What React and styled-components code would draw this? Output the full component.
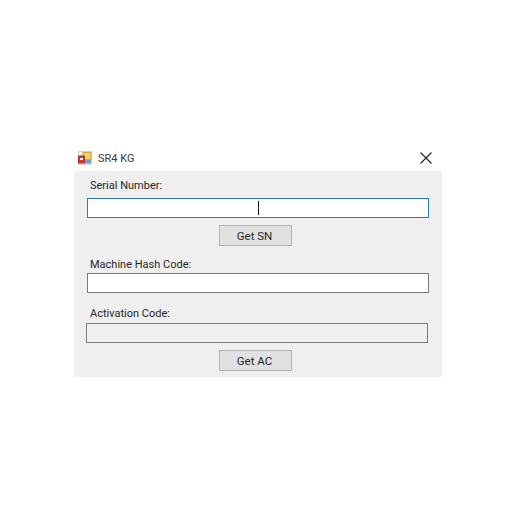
import React from 'react'
import styled, { createGlobalStyle } from 'styled-components'

const Global = createGlobalStyle`
    html, body {
        margin: 0;
        padding: 0;
        background: #fff;
    }
`

const Page = styled.div`
    width: 523px;
    height: 515px;
    padding: 145px 0 0 74px;
    box-sizing: border-box;
    font-family: Roboto, "Liberation Sans", sans-serif;
    font-size: 11px;
    color: #262626;
`

const Dialog = styled.div`
    width: 368px;
`

const TitleBar = styled.div`
    display: flex;
    align-items: center;
    height: 26px;
    padding: 0 10px 0 4px;
`

const Title = styled.span`
    margin-left: 6px;
    flex: 1;
    color: #3a3a3a;
`

const Body = styled.div`
    display: flex;
    flex-direction: column;
    height: 206px;
    padding: 0 13px 0 13px;
    box-sizing: border-box;
    background: #efefef;
`

const Label = styled.label`
    display: block;
    height: 17px;
    line-height: 17px;
    margin-top: ${p => p.$top}px;
    margin-left: 3px;
`

const FieldWrap = styled.div`
    position: relative;
    width: 342px;
    height: 20px;
    margin-top: ${p => p.$top}px;
    margin-left: ${p => p.$left || 0}px;
`

const Field = styled.input`
    display: block;
    width: 100%;
    height: 100%;
    padding: 0 3px;
    box-sizing: border-box;
    border: 1px solid ${p => (p.$focus ? '#2b7a9e' : '#7a7a7a')};
    border-radius: 0;
    outline: none;
    background: ${p => (p.readOnly ? '#f0f0f0' : '#fff')};
`

const Caret = styled.span`
    position: absolute;
    left: 171px;
    top: 3px;
    width: 1px;
    height: 14px;
    background: #111;
`

const ActionButton = styled.button`
    display: block;
    width: 73px;
    height: 21px;
    margin: ${p => p.$top}px 0 0 132px;
    padding: 0 2px 0 0;
    border: 1px solid #b4b4b4;
    border-radius: 0;
    background: #e1e1e1;
    font: inherit;
    font-size: 11.5px;
    color: #262626;
`

const AppIcon = () => (
    <svg width="14" height="14" viewBox="0 0 14 14">
        <rect x="0.5" y="0.5" width="13" height="13" fill="#f4f1ea" stroke="#d8d4cc" />
        <rect x="5" y="1.5" width="8" height="7" fill="#f5d65a" stroke="#c9a83c" />
        <rect x="0.5" y="5" width="6" height="7" fill="#d8352a" stroke="#a83028" />
        <rect x="2" y="7" width="3" height="2" fill="#fff" />
        <rect x="7" y="9" width="6" height="3.5" fill="#6d9ade" />
    </svg>
)

const CloseIcon = () => (
    <svg width="12" height="12" viewBox="0 0 12 12">
        <path d="M0.5 0.5 L11.5 11.5 M11.5 0.5 L0.5 11.5" stroke="#222" strokeWidth="1.1" fill="none" />
    </svg>
)

const App = () => {
    return (
        <Page>
            <Global />
            <Dialog>
                <TitleBar>
                    <AppIcon />
                    <Title>SR4 KG</Title>
                    <CloseIcon />
                </TitleBar>
                <Body>
                    <Label $top={6}>Serial Number:</Label>
                    <FieldWrap $top={4}>
                        <Field $focus />
                        <Caret />
                    </FieldWrap>
                    <ActionButton $top={7}>Get SN</ActionButton>
                    <Label $top={10}>Machine Hash Code:</Label>
                    <FieldWrap $top={0}>
                        <Field />
                    </FieldWrap>
                    <Label $top={12}>Activation Code:</Label>
                    <FieldWrap $top={1} $left={-1}>
                        <Field readOnly />
                    </FieldWrap>
                    <ActionButton $top={7}>Get AC</ActionButton>
                </Body>
            </Dialog>
        </Page>
    )
}

export default App
